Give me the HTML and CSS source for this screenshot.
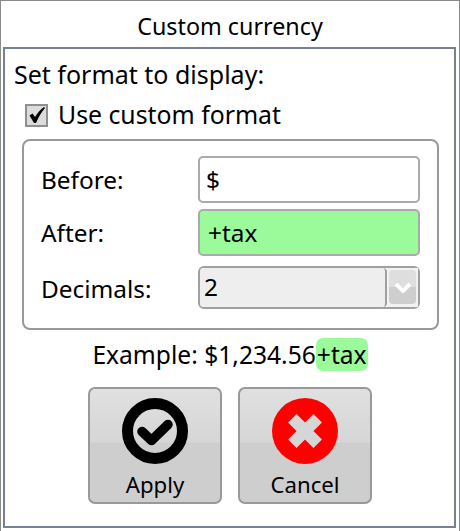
FILE: index.html
```html
<!DOCTYPE html>
<html lang="en">
<head>
  <meta charset="UTF-8" />
  <title>Custom currency</title>
  <link rel="stylesheet" href="styles.css">
</head>
<body>
  <div class="window">
    <div class="title">Custom currency</div>
    <div class="panel">
      <p class="heading">Set format to display:</p>
      <label class="check-row">
        <span class="checkbox">
          <svg width="18" height="18" viewBox="0 0 18 18"><path d="M1.5 9.5 L4.5 7.5 L7 11 C9 7.5 12 4 16 1 L17 2 C13.5 6 10.5 11 8 17 L6 17 Z" fill="#000"/></svg>
        </span>
        Use custom format
      </label>
      <div class="group">
        <div class="field">
          <span class="label">Before:</span>
          <div class="input">$</div>
        </div>
        <div class="field">
          <span class="label">After:</span>
          <div class="input green">+tax</div>
        </div>
        <div class="field">
          <span class="label label-low">Decimals:</span>
          <div class="combo">
            <div class="combo-value">2</div>
            <div class="combo-arrow">
              <span class="combo-btn">
                <svg width="18" height="11" viewBox="0 0 18 11"><path d="M2 2 L9 9 L16 2" fill="none" stroke="#fff" stroke-width="4"/></svg>
              </span>
            </div>
          </div>
        </div>
      </div>
      <div class="example">Example: $1,234.56<span class="chip">+tax</span></div>
      <div class="buttons">
        <button class="btn">
          <svg width="66" height="66" viewBox="0 0 66 66">
            <circle cx="33" cy="33" r="27.5" fill="none" stroke="#000" stroke-width="11"/>
            <path d="M20 33.5 L29.5 42.5 L46 26.5" fill="none" stroke="#000" stroke-width="9.5" stroke-linejoin="round" stroke-linecap="round"/>
          </svg>
          <span>Apply</span>
        </button>
        <button class="btn">
          <svg width="66" height="66" viewBox="0 0 66 66">
            <circle cx="33" cy="33" r="33" fill="#f00"/>
            <path d="M20.3 20.3 L45.7 45.7 M45.7 20.3 L20.3 45.7" fill="none" stroke="#d6d6d6" stroke-width="12"/>
          </svg>
          <span>Cancel</span>
        </button>
      </div>
    </div>
  </div>
</body>
</html>
```

FILE: styles.css
```css
* {
  box-sizing: border-box;
}

body {
  margin: 0;
  background: #fff;
  color: #000;
  font-family: "Noto Sans", "Open Sans", sans-serif;
  font-size: 24.8px;
}

.window {
  width: 460px;
  height: 531px;
  display: flex;
  flex-direction: column;
  border: 1px solid #8a8a8a;
  border-bottom: none;
  overflow: hidden;
}

.title {
  height: 46px;
  line-height: 50px;
  text-align: center;
  font-size: 23.3px;
  flex-shrink: 0;
}

.panel {
  flex: 1;
  margin: 0 3px 3px 2px;
  border: 2px solid #76828f;
  padding: 9px 15px 0 9px;
}

.heading {
  margin: 0;
  line-height: 32px;
  font-size: 25px;
}

.check-row {
  display: flex;
  align-items: center;
  gap: 10px;
  height: 32px;
  margin: 8px 0 0 11px;
}

.checkbox {
  width: 23px;
  height: 23px;
  margin-top: 2px;
  border: 2px solid #8f8f8f;
  background: #dcdcdc;
  display: flex;
  align-items: center;
  justify-content: center;
}

.group {
  margin: 9px 0 0 8px;
  width: 417px;
  height: 191px;
  border: 2px solid #999;
  border-radius: 8px;
  padding: 15px 17px 0 17px;
  display: flex;
  flex-direction: column;
  gap: 6px;
}

.field {
  display: flex;
  align-items: center;
  font-size: 24.4px;
}

.label {
  width: 157px;
}

.label-low {
  padding-top: 6px;
}

.input {
  width: 222px;
  height: 47px;
  border: 2px solid #aaa;
  border-radius: 5px;
  padding-left: 6px;
  line-height: 43px;
}

.green {
  background: #9bfb9b;
  padding-left: 8px;
}

.combo {
  width: 222px;
  height: 43px;
  margin-top: 4px;
  display: flex;
  border: 2px solid #a0a0a0;
  border-radius: 6px;
}

.combo-value {
  flex: 1;
  background: #eee;
  border-right: 2px solid #a0a0a0;
  border-radius: 4px;
  padding-left: 4px;
  line-height: 38px;
}

.combo-arrow {
  width: 31px;
  background: #f2f2f2;
  padding: 2px 2px 3px;
}

.combo-btn {
  display: flex;
  align-items: center;
  justify-content: center;
  height: 100%;
  border-radius: 4px;
  background: linear-gradient(#dedede 50%, #cecece 50%);
}

.example {
  margin-top: 8px;
  height: 33px;
  line-height: 33px;
  text-align: center;
  padding-left: 7px;
  font-size: 24.6px;
}

.chip {
  display: inline-block;
  padding: 0 1px;
  background: #9bfb9b;
  border-radius: 7px;
}

.buttons {
  display: flex;
  gap: 16px;
  margin: 16px 0 0 74px;
}

.btn {
  width: 134px;
  height: 117px;
  padding: 9px 0 0;
  border: 2px solid #999;
  border-radius: 7px;
  background: linear-gradient(#e0e0e0, #d6d6d6 47%, #cecece 48%, #cecece);
  font: inherit;
  font-size: 22.2px;
  color: #000;
  display: flex;
  flex-direction: column;
  align-items: center;
}

.btn span {
  line-height: 30px;
  margin-top: 6px;
}
```
